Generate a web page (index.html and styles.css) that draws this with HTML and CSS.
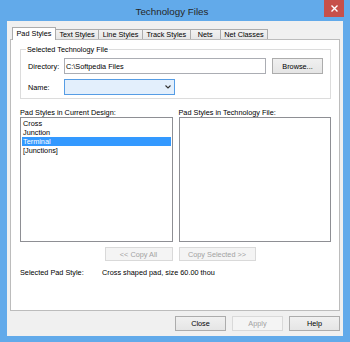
FILE: index.html
```html
<!DOCTYPE html>
<html lang="en">

<head>
    <meta charset="UTF-8">
    <title>Technology Files</title>
    <link rel="stylesheet" href="styles.css">
</head>

<body>
    <div class="window">
        <div class="titlebar">
            <span class="title">Technology Files</span>
            <span class="close">
                <svg width="7" height="7" viewBox="0 0 7 7">
                    <path d="M0.5 0.5 L6.5 6.5 M6.5 0.5 L0.5 6.5" stroke="#fff" stroke-width="1.4" />
                </svg>
            </span>
        </div>

        <div class="client">
            <div class="tabs">
                <div class="tab selected">Pad Styles</div>
                <div class="tab">Text Styles</div>
                <div class="tab">Line Styles</div>
                <div class="tab">Track Styles</div>
                <div class="tab nets">Nets</div>
                <div class="tab">Net Classes</div>
            </div>

            <div class="panel">
                <fieldset class="group">
                    <legend>Selected Technology File</legend>
                    <div class="field-row">
                        <span class="field-label">Directory:</span>
                        <div class="textbox">C:\Softpedia Files</div>
                        <div class="btn browse">Browse...</div>
                    </div>
                    <div class="field-row name-row">
                        <span class="field-label">Name:</span>
                        <div class="combo">
                            <svg width="6" height="4" viewBox="0 0 6 4">
                                <path d="M0.5 0.5 L3 3 L5.5 0.5" stroke="#333" stroke-width="1.1" fill="none" />
                            </svg>
                        </div>
                    </div>
                </fieldset>

                <div class="columns">
                    <div class="col-label">Pad Styles in Current Design:</div>
                    <div class="col-label">Pad Styles in Technology File:</div>

                    <div class="listbox">
                        <div class="item">Cross</div>
                        <div class="item">Junction</div>
                        <div class="item sel">Terminal</div>
                        <div class="item">[Junctions]</div>
                    </div>
                    <div class="listbox"></div>

                    <div class="btn disabled copy-all">&lt;&lt; Copy All</div>
                    <div class="btn disabled copy-sel">Copy Selected &gt;&gt;</div>
                </div>

                <div class="pad-style">
                    <span class="pad-style-label">Selected Pad Style:</span>
                    <span>Cross shaped pad, size 60.00 thou</span>
                </div>
            </div>

            <div class="actions">
                <div class="btn action">Close</div>
                <div class="btn action disabled">Apply</div>
                <div class="btn action">Help</div>
            </div>
        </div>
    </div>
</body>

</html>
```

FILE: styles.css
```css
body {
    margin: 0;
    font-family: "Liberation Sans", Arial, sans-serif;
    font-size: 7.3px;
    line-height: 9px;
    color: #000;
}

* {
    box-sizing: border-box;
}

.window {
    width: 350px;
    height: 342px;
    background-color: #62aaea;
    display: flex;
    flex-direction: column;
}

/* title bar */
.titlebar {
    height: 21px;
    display: grid;
    grid-template-columns: 1fr auto 1fr;
    padding-right: 6px;
}

.title {
    grid-column: 2;
    font-size: 9.8px;
    line-height: 21px;
    padding-top: 1px;
    color: #262626;
}

.close {
    grid-column: 3;
    justify-self: end;
    width: 20px;
    height: 17px;
    background-color: #c7504a;
    display: flex;
    align-items: center;
    justify-content: center;
}

/* client area */
.client {
    flex: 1;
    margin: 0 7px 6px;
    background-color: #f0f0f0;
    padding: 6px 3px 5px;
    display: flex;
    flex-direction: column;
}

.tabs {
    display: flex;
    align-items: flex-end;
    height: 12px;
    padding-left: 2px;
}

.tab {
    height: 10px;
    padding: 0 3.5px;
    margin-left: -1px;
    border: 1px solid #acacac;
    border-bottom: none;
    background: linear-gradient(#f2f2f2, #e6e6e6);
    text-align: center;
    white-space: nowrap;
}

.tab.nets {
    min-width: 31px;
}

.tab.selected {
    height: 13px;
    margin-left: 0;
    margin-bottom: -1px;
    padding-top: 1px;
    background: #fff;
    position: relative;
    z-index: 1;
}

.panel {
    height: 272px;
    border: 1px solid #bcbcbc;
    background-color: #fff;
    padding: 5px 8px 0 9px;
}

/* group box */
.group {
    margin: 0;
    border: 1px solid #dcdcdc;
    padding: 4px 7px 3px 6px;
}

.group legend {
    padding: 0 1px;
    margin-left: -1px;
    line-height: 9px;
}

.field-row {
    display: flex;
    align-items: center;
}

.name-row {
    margin-top: 5px;
}

.field-label {
    width: 37px;
    padding-left: 1px;
}

.textbox {
    flex: 1;
    height: 16px;
    border: 1px solid #abadb3;
    background-color: #fff;
    padding: 3px 1px 0;
}

.combo {
    width: 111px;
    height: 16px;
    border: 1px solid #569de5;
    background-color: #e3effc;
    display: flex;
    align-items: center;
    justify-content: flex-end;
    padding-right: 3px;
}

/* buttons */
.btn {
    border: 1px solid #acacac;
    background: linear-gradient(#f0f0f0, #e5e5e5);
    text-align: center;
    display: flex;
    align-items: center;
    justify-content: center;
    white-space: nowrap;
}

.btn.disabled {
    border-color: #d9d9d9;
    background: #f4f4f4;
    color: #a2a2a2;
}

.browse {
    width: 51px;
    height: 16px;
    margin-left: 6px;
}

/* lists */
.columns {
    display: grid;
    grid-template-columns: 1fr 1fr;
    column-gap: 6px;
    margin-top: 9px;
}

.listbox {
    height: 125px;
    border: 1px solid #8e8f94;
    background-color: #fff;
    padding: 1px;
}

.item {
    padding-left: 1px;
}

.item.sel {
    background-color: #3399ff;
    color: #fff;
}

.copy-all,
.copy-sel {
    height: 14px;
    margin-top: 5px;
}

.copy-all {
    width: 68px;
    justify-self: end;
}

.copy-sel {
    width: 77px;
    justify-self: start;
}

.pad-style {
    display: flex;
    margin-top: 7px;
}

.pad-style-label {
    width: 82px;
}

/* dialog buttons */
.actions {
    display: flex;
    justify-content: flex-end;
    gap: 6px;
    margin-top: 5px;
}

.action {
    width: 51px;
    height: 15px;
}
```
